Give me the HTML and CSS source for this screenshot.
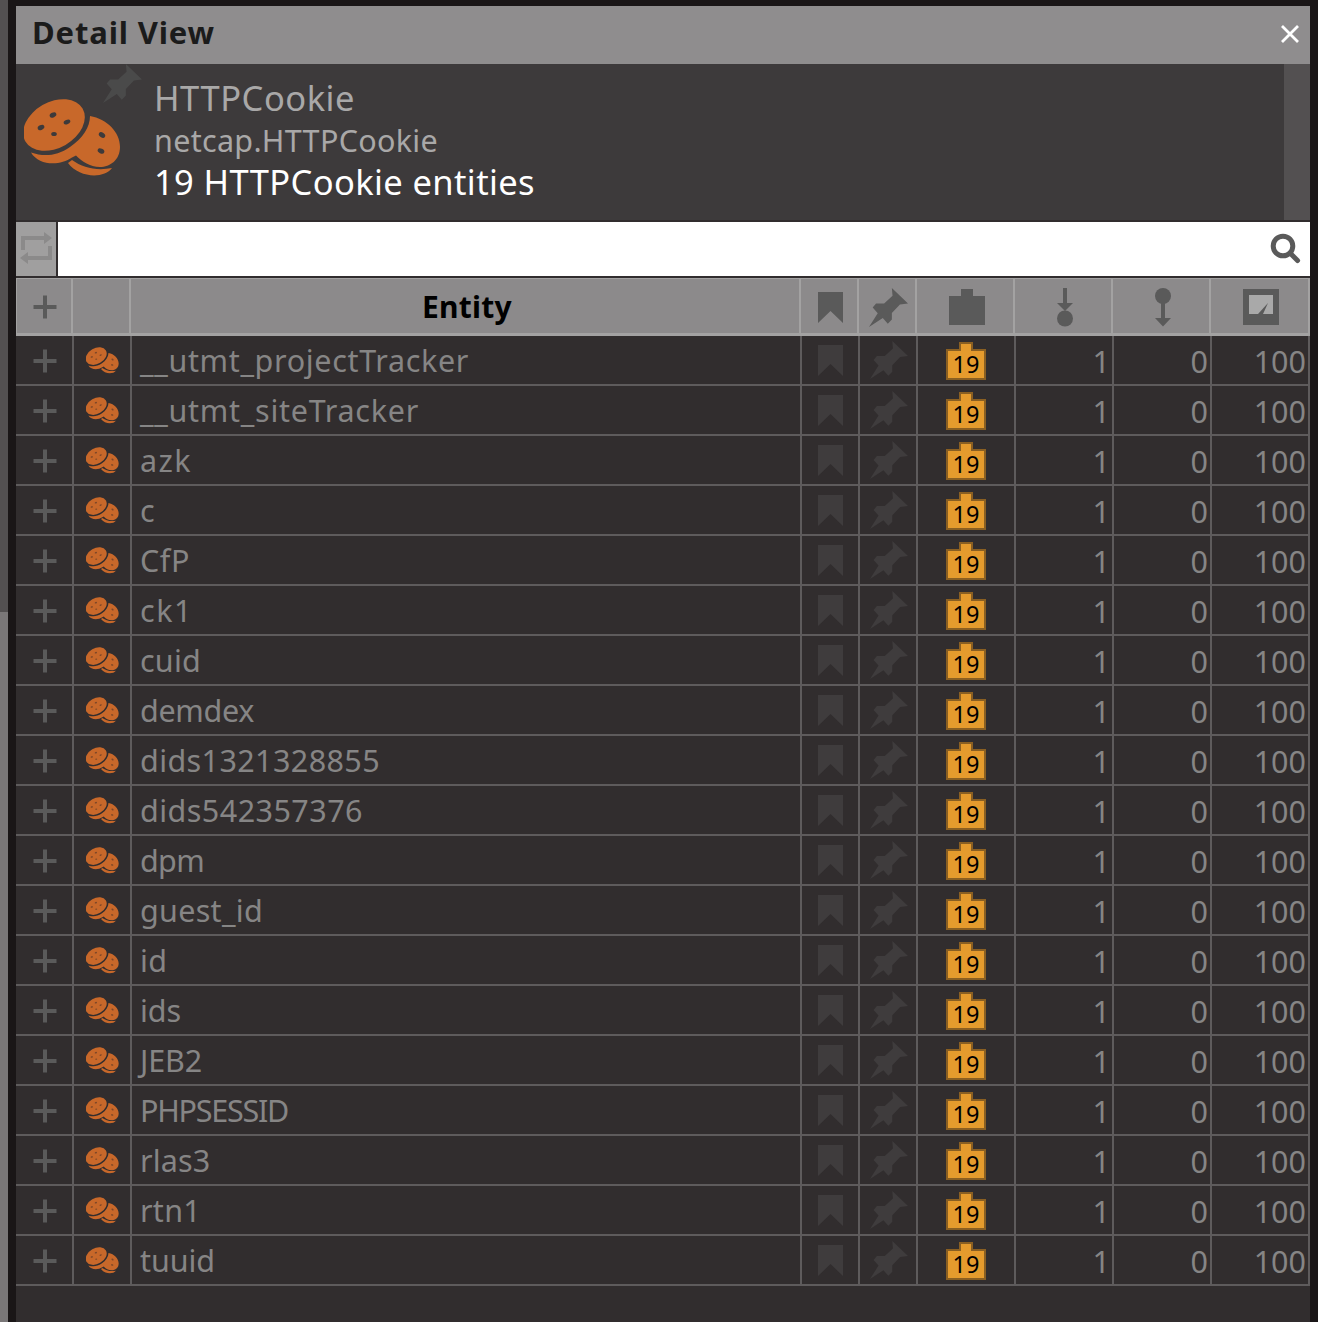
FILE: index.html
```
<!DOCTYPE html>
<html lang="en">
<head>
<meta charset="utf-8">
<title>Detail View</title>
<link rel="stylesheet" href="styles.css">
</head>
<body>
<svg class="defs" width="0" height="0" aria-hidden="true">
  <symbol id="cookies" viewBox="0 0 97 78">
    <ellipse cx="30" cy="26" rx="33" ry="23" transform="rotate(-30 30 26)"/>
    <path d="M66 17C83 20 96 33 96 48C96 61 86 68 76 68C66 68 57 62 52 56.500L48 58.500C36 67 15 67 7 53.500C20 58 33 57 46 48C59 39 66 28 66 17Z"/>
    <path d="M48 61C59 69 73 72 88 69C80 80 55 79 44 64Z"/>
    <g class="chips">
      <ellipse cx="29" cy="16" rx="3.500" ry="2.400" transform="rotate(-25 29 16)"/>
      <ellipse cx="43" cy="23" rx="3.500" ry="2.200" transform="rotate(-25 43 23)"/>
      <ellipse cx="17" cy="28.500" rx="3.500" ry="2.400" transform="rotate(-25 17 28.500)"/>
      <ellipse cx="30" cy="35" rx="2.800" ry="2"/>
      <ellipse cx="78" cy="36" rx="3.500" ry="2.400" transform="rotate(35 78 36)"/>
      <ellipse cx="77" cy="52" rx="3.500" ry="2.400" transform="rotate(25 77 52)"/>
    </g>
  </symbol>
  <symbol id="pin" viewBox="0 0 116 116">
    <path d="M68 0L116 46L92 49L68 74V94L56 106L41 89L0 116L26 75L11 58L21 46H45L70 23Z"/>
  </symbol>
  <symbol id="plus" viewBox="0 0 24 24"><path d="M10 .5h4V10h9.500v4H14v9.500h-4V14H.5v-4H10z"/></symbol>
  <symbol id="bookmark" viewBox="0 0 25 31"><path d="M0 0h25v31L12.500 19 0 31z"/></symbol>
</svg>

<div class="window">
  <div class="scrollstrip"></div>
  <main class="panel">
    <header class="titlebar">
      <h1><span class="fit" data-width="181">Detail View</span></h1>
      <svg class="close" width="20" height="20" viewBox="0 0 20 20"><path d="M2 2L18 18M18 2L2 18"/></svg>
    </header>

    <section class="summary">
      <div class="badge-area">
        <svg class="cookie-large" width="97" height="78"><use href="#cookies"/></svg>
        <svg class="pin-large" width="39" height="39"><use href="#pin"/></svg>
      </div>
      <div class="summary-text">
        <p class="name"><span class="fit" data-width="199">HTTPCookie</span></p>
        <p class="type"><span class="fit" data-width="282">netcap.HTTPCookie</span></p>
        <p class="count"><span class="fit" data-width="379">19 HTTPCookie entities</span></p>
      </div>
      <div class="summary-scroll"></div>
    </section>

    <section class="search">
      <button class="repeat" aria-label="Toggle">
        <svg width="34" height="34" viewBox="0 0 34 34"><path class="line" d="M4 19V7H25M31 15V27H9"/><path d="M25 1l8 6-8 6zM9 21l-8 6 8 6z"/></svg>
      </button>
      <div class="field">
        <svg width="32" height="32" viewBox="0 0 32 32"><circle cx="14" cy="14" r="9.800"/><path d="M21 21L28.500 28.500"/></svg>
      </div>
    </section>

    <div class="row head">
      <div class="cell"><svg width="24" height="24"><use href="#plus"/></svg></div>
      <div class="cell"></div>
      <div class="cell"><span class="fit" data-width="88">Entity</span></div>
      <div class="cell"><svg width="25" height="31"><use href="#bookmark"/></svg></div>
      <div class="cell"><svg width="39" height="39"><use href="#pin"/></svg></div>
      <div class="cell"><svg width="36" height="36" viewBox="0 0 36 36"><path d="M0 7h12V0h12v7h12v29H0z"/></svg></div>
      <div class="cell"><svg width="16" height="39" viewBox="0 0 16 39"><path d="M6 0h4v15h6L8 23 0 15h6z"/><circle cx="8" cy="30.500" r="8"/></svg></div>
      <div class="cell"><svg width="16" height="39" viewBox="0 0 16 39"><circle cx="8" cy="8" r="8"/><path d="M6 14h4v16h6L8 38.500 0 30h6z"/></svg></div>
      <div class="cell"><svg width="36" height="36" viewBox="0 0 36 36"><path d="M0 0h36v36H0z"/><path class="dial" d="M6 6h24v19H6z"/><path d="M25 14L15 25h5z"/></svg></div>
    </div>
    <div id="rows"></div>
  </main>
</div>
<script src="table.js"></script>
</body>
</html>
```
FILE: styles.css
```
* { box-sizing: border-box; }
body {
  margin: 0;
  background: #1a1617;
  font-family: "Noto Sans", "Open Sans", sans-serif;
  overflow: hidden;
}
svg { display: block; flex: none; }
.defs { position: absolute; }
h1, p { margin: 0; }
.fit { white-space: pre; }

.window { display: flex; gap: 8px; height: 1322px; padding-right: 8px; }
.scrollstrip {
  width: 8px;
  background: linear-gradient(#535051 612px, #7a7778 612px);
}
.panel {
  width: 1294px;
  margin-top: 6px;
  background: #312d2e;
}

.titlebar {
  display: flex;
  justify-content: space-between;
  align-items: center;
  height: 58px;
  padding: 0 10px 2px 16px;
  background: #8f8d8e;
}
.titlebar h1 { padding-bottom: 4px; font-size: 31px; line-height: 42px; color: #1b1b1b; }
.close { fill: none; stroke: #fff; stroke-width: 2.8; }

.summary {
  display: flex;
  height: 156px;
  background: #3d3a3b;
}
.badge-area { position: relative; width: 138px; padding: 35px 0 0 8px; }
.cookie-large { --chip: #3d3a3b; fill: #c8682a; }
.chips { fill: var(--chip); }
.pin-large { position: absolute; left: 87px; top: 0; fill: #4a4a4a; }
.summary-text { flex: 1; padding-top: 13px; color: #a9a8a8; }
.summary-text p { height: 42px; line-height: 42px; }
.name { font-size: 34.5px; }
.type { font-size: 30.5px; }
.count { font-size: 34.5px; color: #fff; }
.summary-scroll { width: 26px; background: #535051; }

.search { display: flex; gap: 2px; padding: 2px 0; height: 58px; }
.repeat {
  display: flex;
  align-items: center;
  justify-content: center;
  width: 40px;
  padding: 0 0 2px;
  border: 0;
  background: #a09f9f;
}
.repeat svg { fill: #8b8a8a; }
.repeat .line { fill: none; stroke: #8b8a8a; stroke-width: 4; }
.field {
  display: flex;
  flex: 1;
  justify-content: flex-end;
  align-items: center;
  padding: 0 9px 3px 0;
  background: #fff;
}
.field svg { fill: none; stroke: #5a5a5a; stroke-width: 5; stroke-linecap: round; }

.row {
  display: grid;
  grid-template-columns: 58px 58px 670px 58px 58px 98px 98px 98px 98px;
  height: 50px;
}
.cell {
  display: flex;
  align-items: center;
  justify-content: center;
  border-right: 2px solid #5e5b5c;
  border-bottom: 2px solid #5e5b5c;
  color: #868585;
  font-size: 30.5px;
  line-height: 42px;
  fill: #5a5a5a;
}
.head {
  grid-template-columns: 56px 58px 670px 58px 58px 98px 98px 98px 99px;
  height: 58px;
  border-top: 1px solid #a3a2a2;
  border-left: 1px solid #a3a2a2;
  background: #8c8a8b;
}
.head .cell {
  padding-top: 2px;
  padding-left: 4px;
  border-right-color: #a3a2a2;
  border-bottom: 3px solid #a3a2a2;
  color: #000;
  font-size: 30px;
  font-weight: 700;
}
.head .cell:first-child { padding-left: 2px; }
.head .cell:nth-child(4) { padding-left: 2px; }
.head .cell:nth-child(5) { padding-left: 3px; }
.head .cell:nth-child(9) { padding-left: 3px; }
.dial { fill: #a9a9a9; }

.plus-cell { padding: 2px 0 0 2px; }
.cookie { --chip: #7c4729; fill: #c8682a; }
.name-cell { justify-content: flex-start; padding: 0 0 0 8px; }
.faint { padding-left: 1px; fill: #3f3c3d; }
.mark-cell { padding: 1px 0 0; }
.number { justify-content: flex-end; padding: 1px 2px 0 0; }
.tag-cell { padding-top: 2px; }
.tag { fill: #e59b2d; stroke: #8a5f22; stroke-width: 2; }
.tag text {
  fill: #000;
  stroke: none;
  font-size: 23.5px;
  text-anchor: middle;
}
```
FILE: table.js
```
// Entity name and the width its label takes in the name column.
const entities = [
  ["__utmt_projectTracker", 327], ["__utmt_siteTracker", 277], ["azk", 50],
  ["c", 15], ["CfP", 48], ["ck1", 51], ["cuid", 59], ["demdex", 112],
  ["dids1321328855", 238], ["dids542357376", 221], ["dpm", 62],
  ["guest_id", 121], ["id", 25.5], ["ids", 39], ["JEB2", 60],
  ["PHPSESSID", 146], ["rlas3", 68.5], ["rtn1", 59], ["tuuid", 73]
];

document.getElementById("rows").innerHTML = entities.map(([name, width]) => `
  <div class="row">
    <div class="cell plus-cell"><svg width="24" height="24"><use href="#plus"/></svg></div>
    <div class="cell"><svg class="cookie" width="33" height="27"><use href="#cookies"/></svg></div>
    <div class="cell name-cell"><span class="fit" data-width="${width}">${name}</span></div>
    <div class="cell faint mark-cell"><svg width="25" height="31"><use href="#bookmark"/></svg></div>
    <div class="cell faint"><svg width="38" height="38"><use href="#pin"/></svg></div>
    <div class="cell tag-cell"><svg class="tag" width="40" height="38" viewBox="0 0 40 38"><path d="M1 8h13V1h12v7h13v29H1z"/><text x="20" y="30.500">19</text></svg></div>
    <div class="cell number">1</div>
    <div class="cell number">0</div>
    <div class="cell number">100</div>
  </div>`).join("");

// Track each label so that it fills its given width.
for (const el of document.querySelectorAll(".fit")) {
  const extra = Number(el.dataset.width) + 2 - el.getBoundingClientRect().width;
  el.style.letterSpacing = (extra / el.textContent.length).toFixed(3) + "px";
}
```
